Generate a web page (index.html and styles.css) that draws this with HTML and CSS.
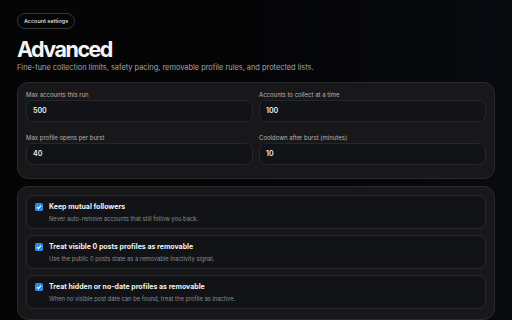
FILE: index.html
```html
<!DOCTYPE html>
<html>
<head>
    <link rel="stylesheet" href="styles.css">
</head>
<body>
<div class="page">
    <span class="badge">Account settings</span>
    <h1 class="title">Advanced</h1>
    <p class="subtitle">Fine-tune collection limits, safety pacing, removable profile rules, and protected lists.</p>

    <div class="card fields">
        <div class="field">
            <label>Max accounts this run</label>
            <div class="input">500</div>
        </div>
        <div class="field">
            <label>Accounts to collect at a time</label>
            <div class="input">100</div>
        </div>
        <div class="field">
            <label>Max profile opens per burst</label>
            <div class="input">40</div>
        </div>
        <div class="field">
            <label>Cooldown after burst (minutes)</label>
            <div class="input">10</div>
        </div>
    </div>

    <div class="card toggles">
        <div class="toggle">
            <span class="check"><svg viewBox="0 0 8 8" width="8" height="8"><path d="M2 4.2 L3.4 5.6 L6 2.6" fill="none" stroke="#fff" stroke-width="1.1"/></svg></span>
            <div>
                <div class="toggle-title">Keep mutual followers</div>
                <div class="toggle-desc">Never auto-remove accounts that still follow you back.</div>
            </div>
        </div>
        <div class="toggle">
            <span class="check"><svg viewBox="0 0 8 8" width="8" height="8"><path d="M2 4.2 L3.4 5.6 L6 2.6" fill="none" stroke="#fff" stroke-width="1.1"/></svg></span>
            <div>
                <div class="toggle-title">Treat visible 0 posts profiles as removable</div>
                <div class="toggle-desc">Use the public 0 posts state as a removable inactivity signal.</div>
            </div>
        </div>
        <div class="toggle">
            <span class="check"><svg viewBox="0 0 8 8" width="8" height="8"><path d="M2 4.2 L3.4 5.6 L6 2.6" fill="none" stroke="#fff" stroke-width="1.1"/></svg></span>
            <div>
                <div class="toggle-title">Treat hidden or no-date profiles as removable</div>
                <div class="toggle-desc">When no visible post date can be found, treat the profile as inactive.</div>
            </div>
        </div>
    </div>
</div>
</body>
</html>
```

FILE: styles.css
```css
html, body {
    margin: 0;
    height: 100%;
    overflow: hidden;
}
body {
    background: linear-gradient(90deg, #050506 0%, #050507 50%, #080a0f 100%);
    font-family: Inter, "Liberation Sans", sans-serif;
    color: #f2f2f2;
}
.page {
    padding: 13px 17px 0 17px;
}
.badge {
    display: block;
    width: fit-content;
    box-sizing: border-box;
    height: 16px;
    line-height: 14px;
    padding: 0 6px;
    border: 1px solid #34353a;
    border-radius: 999px;
    font-size: 5.4px;
    font-weight: 600;
    color: #d8d8d8;
}
.title {
    margin: 8px 0 0 0;
    font-size: 21.5px;
    font-weight: 700;
    letter-spacing: -1.5px;
    line-height: 24px;
    color: #f4f4f4;
}
.subtitle {
    margin: 1px 0 0 0;
    font-size: 7.4px;
    line-height: 12px;
    color: #a4a4a8;
}
.card {
    background: #18181b;
    border: 1px solid #2a2a2e;
    border-radius: 11px;
}
.fields {
    margin-top: 8px;
    padding: 8px 8px 13px 8px;
    display: grid;
    grid-template-columns: 1fr 1fr;
    column-gap: 6px;
    row-gap: 12px;
}
.field label {
    display: block;
    font-size: 6px;
    line-height: 8px;
    color: #b4b4b8;
    margin-bottom: 1px;
}
.input {
    height: 20px;
    line-height: 20px;
    padding: 0 6px;
    background: #111317;
    border: 1px solid #25272c;
    border-radius: 7px;
    font-size: 7px;
    font-weight: 600;
    color: #f0f0f0;
}
.toggles {
    margin-top: 7px;
    padding: 8px 8px 10px 8px;
    display: flex;
    flex-direction: column;
    gap: 6px;
}
.toggle {
    display: flex;
    align-items: flex-start;
    gap: 6px;
    height: 32px;
    padding: 0 8px;
    background: #111317;
    border: 1px solid #26282c;
    border-radius: 7px;
}
.check {
    margin-top: 7px;
    width: 8px;
    height: 8px;
    background: #2a8ee6;
    border-radius: 1.5px;
    display: flex;
    flex-shrink: 0;
}
.toggle-title {
    margin-top: 5px;
    font-size: 7px;
    line-height: 12px;
    font-weight: 700;
    color: #f2f2f2;
}
.toggle-desc {
    font-size: 5.8px;
    line-height: 12px;
    color: #8a8b90;
}
```
